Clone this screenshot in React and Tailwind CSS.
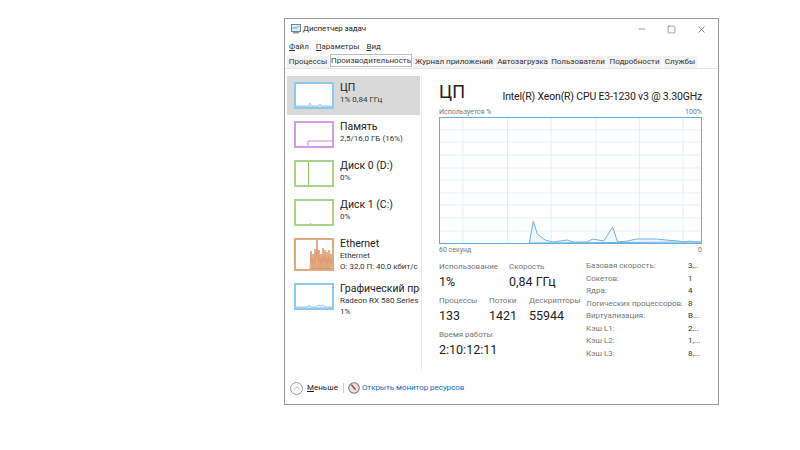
import { ChevronUp, Minus, Square, X } from 'lucide-react';

// mini graphs in the left list
function Thumb({ color, children }) {
  return (
    <div className="w-10 h-[27px] shrink-0 border-2 bg-white" style={{ borderColor: color }}>
      <svg width="36" height="23" viewBox="0 0 36 23" className="block">
        {children}
      </svg>
    </div>
  );
}

function SideItem({ active, title, lines, thumb }) {
  return (
    <div className={`flex gap-[6px] pl-[7px] pt-[6px] h-[39px] w-[133px] overflow-hidden ${active ? 'bg-[#d9d9d9]' : ''}`}>
      {thumb}
      <div className="whitespace-nowrap">
        <div className="text-[10.5px] leading-[12px] text-[#222]">{title}</div>
        {lines.map((l) => (
          <div key={l} className="text-[8px] leading-[11px] text-[#333]">{l}</div>
        ))}
      </div>
    </div>
  );
}

function Stat({ label, value, className }) {
  return (
    <div className={className}>
      <div className="text-[8px] leading-[11px] text-[#777] whitespace-nowrap">{label}</div>
      <div className="text-[12.5px] leading-[20px] text-[#222] whitespace-nowrap">{value}</div>
    </div>
  );
}

const tabs = [
  { name: 'Процессы', w: 'w-[42px]' },
  { name: 'Производительность', w: 'w-[82px]' },
  { name: 'Журнал приложений', w: 'w-[82px]' },
  { name: 'Автозагрузка', w: 'w-[53px]' },
  { name: 'Пользователи', w: 'w-[56px]' },
  { name: 'Подробности', w: 'w-[55px]' },
  { name: 'Службы', w: 'w-[34px]' },
];

const specs = [
  ['Базовая скорость:', '3,..'],
  ['Сокетов:', '1'],
  ['Ядра:', '4'],
  ['Логических процессоров:', '8'],
  ['Виртуализация:', 'В...'],
  ['Кэш L1:', '2...'],
  ['Кэш L2:', '1,...'],
  ['Кэш L3:', '8,...'],
];

const cpuLine = '90,126 94,104 98,117 106,123 114,125 128,123 134,125 148,125 154,122 165,124 174,110 179,125 189,124 198,122 208,122 218,122 228,123 240,124 245,125 252,124 257,125 263,125';

export default function App() {
  return (
    <div className="w-[800px] h-[450px] bg-white overflow-hidden pt-[18px] pl-[284px] font-['Roboto',sans-serif]">
      <div className="w-[435px] h-[387px] border border-[#9a9a9a] bg-white flex flex-col">
        {/* title bar */}
        <div className="h-[20px] flex items-center pl-[5px] shrink-0">
          <svg width="12" height="12" viewBox="0 0 12 12" className="mr-[1px]">
            <rect x="1.5" y="1.5" width="9" height="7" fill="#dfeef7" stroke="#6b8796" />
            <path d="M2.5 6l2-2 1.5 1.5 2.5-2.5" fill="none" stroke="#3f9bd0" />
            <rect x="3" y="9" width="6" height="1.5" fill="#8a9aa3" />
          </svg>
          <span className="text-[8px] tracking-[-0.1px] text-[#222]">Диспетчер задач</span>
          <div className="ml-auto flex items-center gap-[20px] pr-[11px] text-[#333]">
            <Minus size={10} strokeWidth={1.2} />
            <Square size={9} strokeWidth={1.2} />
            <X size={11} strokeWidth={1.2} />
          </div>
        </div>
        {/* menu */}
        <div className="h-[15px] flex items-center gap-[7px] pl-[4px] text-[8px] text-[#333] shrink-0">
          <span><u>Ф</u>айл</span>
          <span><u>П</u>араметры</span>
          <span><u>В</u>ид</span>
        </div>
        {/* tabs */}
        <div className="h-[15px] flex items-end gap-[1px] pl-[2px] border-b border-[#e6e6e6] shrink-0">
          {tabs.map((t) => (
            <div
              key={t.name}
              className={t.name === 'Производительность'
                ? `${t.w} h-[13px] mb-[1px] bg-white border border-[#bdbdbd] text-[8px] leading-[11px] text-center text-[#333] whitespace-nowrap`
                : `${t.w} h-[12px] bg-[#f2f2f2] text-[8px] leading-[12px] text-center text-[#333] whitespace-nowrap`}
            >
              {t.name}
            </div>
          ))}
        </div>
        {/* content */}
        <div className="flex flex-1 min-h-0">
          <div className="w-[137px] mt-[7px] pl-[2px] border-r border-[#ececec] mb-[2px] shrink-0">
            <SideItem
              active
              title="ЦП"
              lines={['1% 0,84 ГГц']}
              thumb={
                <Thumb color="#8ec8ea">
                  <path d="M0 23V22L13 22 14 19 16 22 22 22 24 20 26 22 36 22V23Z" fill="#e4f1f9" stroke="#6db4e0" strokeWidth="0.6" />
                </Thumb>
              }
            />
            <SideItem
              title="Память"
              lines={['2,5/16,0 ГБ (16%)']}
              thumb={
                <Thumb color="#d49be8">
                  <path d="M12 23V18H36" fill="none" stroke="#c98be2" strokeWidth="1" />
                </Thumb>
              }
            />
            <SideItem
              title="Диск 0 (D:)"
              lines={['0%']}
              thumb={
                <Thumb color="#a8d48a">
                  <rect x="12" y="0" width="1" height="23" fill="#8cc466" />
                </Thumb>
              }
            />
            <SideItem
              title="Диск 1 (C:)"
              lines={['0%']}
              thumb={
                <Thumb color="#a8d48a">
                  <rect x="14" y="22" width="1" height="1" fill="#8cc466" />
                </Thumb>
              }
            />
            <SideItem
              title="Ethernet"
              lines={['Ethernet', 'О: 32,0 П: 40,0 кбит/с']}
              thumb={
                <div className="w-10 h-[33px] shrink-0 border-2 border-[#e0aa80] bg-white">
                  <svg width="36" height="29" viewBox="0 0 36 29" className="block">
                    <path d="M14 29L15 11 16 29 17 14 18 29 19 9 20 29 21 0 22 29 23 10 24 29 25 14 26 29 27 8 28 29 29 10 30 29 31 12 32 29 33 10 34 29 35 14 36 29Z" fill="#fbeadd" stroke="#d0763a" strokeWidth="0.7" />
                  </svg>
                </div>
              }
            />
            <div className="h-[6px]" />
            <SideItem
              title="Графический процессор"
              lines={['Radeon RX 580 Series', '1%']}
              thumb={
                <Thumb color="#8ec8ea">
                  <path d="M0 23V22L12 22 13 20 15 22 20 22 22 20 25 21 27 20 30 22 36 22V23Z" fill="#e4f1f9" stroke="#6db4e0" strokeWidth="0.6" />
                </Thumb>
              }
            />
          </div>
          {/* detail */}
          <div className="pl-[17px] pt-[9px] w-[281px] flex flex-col">
            <div className="flex items-end justify-between w-[263px]">
              <span className="text-[18px] leading-[28px] text-[#222]">ЦП</span>
              <span className="text-[10.5px] tracking-[-0.17px] leading-[16px] mb-[1px] text-[#222] whitespace-nowrap">Intel(R) Xeon(R) CPU E3-1230 v3 @ 3.30GHz</span>
            </div>
            <div className="flex justify-between w-[263px] text-[7px] leading-[10px] text-[#777] mt-[1px]">
              <span>Используется %</span>
              <span>100%</span>
            </div>
            <div className="w-[263px] h-[127px] border-[1.5px] border-[#62b0e0] box-border">
              <svg width="261" height="125" viewBox="0 1 263 125" preserveAspectRatio="none" className="block">
                {[13, 25, 38, 51, 63, 76, 88, 101, 114].map((y) => (
                  <line key={y} x1="0" x2="263" y1={y} y2={y} stroke="#e4f0f8" strokeWidth="1" />
                ))}
                {[23, 68, 112, 157, 201, 245].map((x) => (
                  <line key={x} x1={x} x2={x} y1="0" y2="126" stroke="#e4f0f8" strokeWidth="1" />
                ))}
                <polygon points={cpuLine} fill="#f1f6fb" stroke="#6db4e0" strokeWidth="1" />
              </svg>
            </div>
            <div className="flex justify-between w-[263px] text-[7px] leading-[10px] text-[#777] mt-[1px]">
              <span>60 секунд</span>
              <span>0</span>
            </div>
            <div className="flex mt-[5px]">
              <div className="w-[147px] shrink-0 pt-[1px]">
                <div className="flex">
                  <Stat label="Использование" value="1%" className="w-[70px]" />
                  <Stat label="Скорость" value="0,84 ГГц" />
                </div>
                <div className="flex mt-[3px]">
                  <Stat label="Процессы" value="133" className="w-[50px]" />
                  <Stat label="Потоки" value="1421" className="w-[40px]" />
                  <Stat label="Дескрипторы" value="55944" />
                </div>
                <Stat label="Время работы" value="2:10:12:11" className="mt-[3px]" />
              </div>
              <div className="text-[8px] leading-[12.5px]">
                {specs.map(([k, v]) => (
                  <div key={k} className="flex whitespace-nowrap">
                    <span className="w-[102px] text-[#777]">{k}</span>
                    <span className="text-[#333]">{v}</span>
                  </div>
                ))}
              </div>
            </div>
          </div>
        </div>
        {/* footer */}
        <div className="h-[32px] flex items-center pl-[5px] shrink-0">
          <div className="w-[13px] h-[13px] rounded-full border border-[#999] flex items-center justify-center text-[#666]">
            <ChevronUp size={10} strokeWidth={1.2} />
          </div>
          <span className="ml-[4px] text-[8px] text-[#222]"><u>М</u>еньше</span>
          <div className="w-px h-[10px] bg-[#ccc] ml-[5px] mr-[4px]" />
          <svg width="12" height="12" viewBox="0 0 11 11">
            <circle cx="5.5" cy="5.5" r="4.8" fill="#e8e8e8" stroke="#777" />
            <path d="M3 2.5L7 7" stroke="#c33" strokeWidth="1.4" />
          </svg>
          <span className="ml-[2px] text-[8px] tracking-[-0.05px] text-[#0f6cbd]">Открыть монитор ресурсов</span>
        </div>
      </div>
    </div>
  );
}
